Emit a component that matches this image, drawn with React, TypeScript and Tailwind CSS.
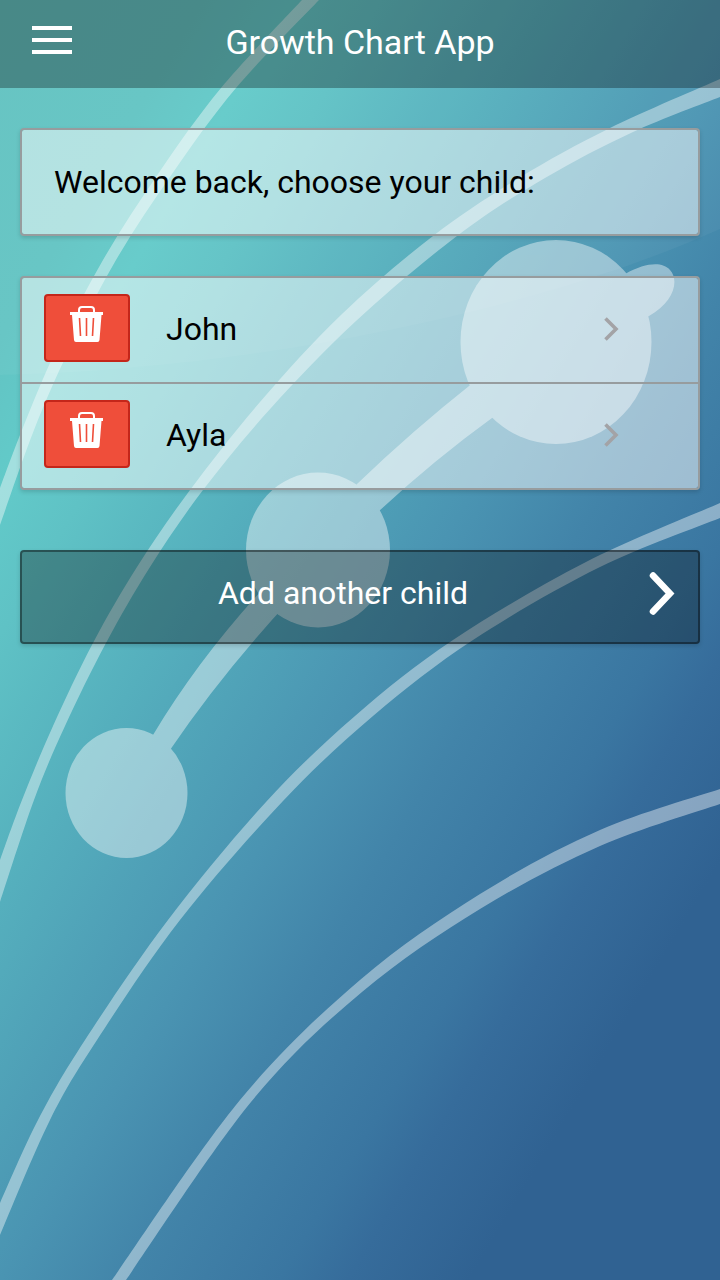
import React, { useState } from 'react';

interface Child {
  id: number;
  name: string;
}

type Point = [number, number];

const initialChildren: Child[] = [
  { id: 1, name: 'John' },
  { id: 2, name: 'Ayla' },
];

// Growth curves, each one as its upper edge and its lower edge
const curves: { upper: Point[]; lower: Point[] }[] = [
  {
    upper: [[302, 0], [221, 88], [158, 174], [103, 260], [56, 350], [22, 430], [0, 488]],
    lower: [[0, 525], [34, 430], [69, 350], [116, 260], [172, 174], [236, 88], [319, 0]],
  },
  {
    upper: [[720, 79], [610, 128], [519, 178], [433, 236], [342, 314], [260, 402], [190, 490], [137, 567], [93, 643], [53, 726], [22, 800], [0, 860]],
    lower: [[0, 902], [34, 800], [65, 726], [106, 643], [150, 567], [203, 490], [271, 408], [356, 321], [457, 236], [545, 178], [633, 132], [720, 97]],
  },
  {
    upper: [[720, 503], [586, 562], [453, 640], [355, 716], [266, 802], [168, 920], [85, 1040], [38, 1120], [0, 1203]],
    lower: [[0, 1235], [50, 1120], [97, 1040], [180, 920], [283, 801], [373, 716], [473, 640], [600, 567], [720, 518]],
  },
  {
    upper: [[720, 789], [600, 830], [480, 894], [360, 980], [240, 1100], [112, 1280]],
    lower: [[126, 1280], [251, 1102], [362, 992], [480, 909], [600, 846], [720, 804]],
  },
];

// Catmull-Rom spline through the points, written as cubic segments
const spline = (points: Point[]) =>
  points
    .slice(1)
    .map((p2, i) => {
      const p0 = points[i - 1] ?? points[i];
      const p1 = points[i];
      const p3 = points[i + 2] ?? p2;
      const c1 = [p1[0] + (p2[0] - p0[0]) / 6, p1[1] + (p2[1] - p0[1]) / 6];
      const c2 = [p2[0] - (p3[0] - p1[0]) / 6, p2[1] - (p3[1] - p1[1]) / 6];
      return `C${c1} ${c2} ${p2}`;
    })
    .join('');

function Background() {
  return (
    <svg
      className="absolute inset-0 -z-10 h-full w-full"
      viewBox="0 0 720 1280"
      preserveAspectRatio="none"
      aria-hidden="true"
    >
      <defs>
        <linearGradient id="sky" gradientUnits="userSpaceOnUse" x1="0" y1="0" x2="1000" y2="600">
          <stop offset="0" stopColor="#61c2c0" />
          <stop offset="0.15" stopColor="#62c4c3" />
          <stop offset="0.215" stopColor="#62cac9" />
          <stop offset="0.28" stopColor="#5fc2c5" />
          <stop offset="0.4" stopColor="#55afbd" />
          <stop offset="0.565" stopColor="#4a94b2" />
          <stop offset="0.66" stopColor="#4284a9" />
          <stop offset="0.77" stopColor="#3a76a1" />
          <stop offset="0.82" stopColor="#366c9b" />
          <stop offset="0.91" stopColor="#306292" />
        </linearGradient>
      </defs>
      <path d="M0 0H720V1280H0Z" fill="url(#sky)" />
      <path d="M0 0H720V229C560 302 280 368 0 375Z" fill="#fff" opacity="0.04" />
      <g fill="#fff" opacity="0.41">
        {curves.map(({ upper, lower }, i) => (
          <path key={i} d={`M${upper[0]}${spline(upper)}L${lower[0]}${spline(lower)}Z`} />
        ))}
      </g>
      <g fill="#fff" opacity="0.42">
        <ellipse cx="556" cy="342" rx="95.5" ry="102" />
        <ellipse cx="318" cy="550" rx="72" ry="77.5" />
        <ellipse cx="126.5" cy="793" rx="61" ry="65" />
        <path d="M600 290L626 273.500C645 263 662 261 670 270C680 281 673 303 649 316L620 330Z" />
        <path d="M357 484Q412 431 474 382L520 400L492 418Q434 460 378 512L340 520Z" />
        <path d="M153 735Q198 660 262 590L290 600Q220 676 170 750L140 770Z" />
      </g>
    </svg>
  );
}

function TrashIcon() {
  return (
    <svg className="h-9 w-[34px]" viewBox="0 0 34 36" fill="none" aria-hidden="true">
      <path d="M9 7V4Q9 1 12 1H21Q24 1 24 4V7" stroke="#fff" strokeWidth="2" />
      <path d="M0 6H33V9H31.500L29.500 34Q29.300 36 27.500 36H6Q4.200 36 4 34L2 9H0Z" fill="#fff" />
      <path d="M9.500 12L10.500 30M16.500 12V30M23.500 12L22.500 30" stroke="#ef4e3a" strokeWidth="1.600" />
    </svg>
  );
}

export default function App() {
  const [children, setChildren] = useState<Child[]>(initialChildren);

  const handleDelete = (id: number) => {
    setChildren(prev => prev.filter(child => child.id !== id));
  };

  return (
    <div className="relative isolate min-h-screen overflow-hidden font-[Roboto,sans-serif] text-[32px] leading-10 text-black">
      <Background />

      <header className="grid h-[88px] grid-cols-[80px_1fr_80px] items-center bg-black/30 text-white">
        <button type="button" aria-label="Open menu" className="flex h-20 items-center pb-2 pl-8">
          <svg className="h-7 w-10" viewBox="0 0 40 28" fill="#fff" aria-hidden="true">
            <path d="M0 0H40V4H0ZM0 12H40V16H0ZM0 24H40V28H0Z" />
          </svg>
        </button>
        <h1 className="pb-1 text-center text-[34px]">Growth Chart App</h1>
      </header>

      <main className="px-5 pt-10">
        <p className="rounded border-2 border-[#979c9e] bg-white/50 bg-clip-padding px-8 py-8 shadow-[0_2px_4px_rgba(0,0,0,0.15)]">
          Welcome back, choose your child:
        </p>

        <ul className="mt-10 divide-y-2 divide-[#979c9e] rounded border-2 border-[#979c9e] bg-white/50 bg-clip-padding shadow-[0_2px_4px_rgba(0,0,0,0.15)]">
          {children.map(child => (
            <li key={child.id} className="flex items-start px-[22px] pt-4 pb-[18px]">
              <button
                type="button"
                aria-label={`Delete ${child.name}`}
                onClick={() => handleDelete(child.id)}
                className="flex h-[68px] w-[86px] justify-center rounded border-2 border-[#c4261a] bg-[#ef4e3a] pt-[10px]"
              >
                <TrashIcon />
              </button>
              <a href={`#child-${child.id}`} className="flex h-[70px] flex-1 items-center justify-between pr-14 pl-9">
                {child.name}
                <svg className="h-7 w-4" viewBox="0 0 16 28" fill="none" aria-hidden="true">
                  <path d="M1.500 3.500L12 14L1.500 24.500" stroke="#a3a3a6" strokeWidth="3.600" />
                </svg>
              </a>
            </li>
          ))}
        </ul>

        <button
          type="button"
          className="mt-[60px] flex h-[94px] w-full items-center rounded border-2 border-black/40 bg-black/30 pr-[22px] pb-2 text-white shadow-[0_2px_4px_rgba(0,0,0,0.15)]"
        >
          <span className="flex-1 pl-4 text-center">Add another child</span>
          <svg className="h-11 w-7" viewBox="0 0 28 44" fill="none" aria-hidden="true">
            <path d="M5 4.500L22 22.500L5 40.500" stroke="#fff" strokeWidth="6.500" strokeLinecap="round" />
          </svg>
        </button>
      </main>
    </div>
  );
}
